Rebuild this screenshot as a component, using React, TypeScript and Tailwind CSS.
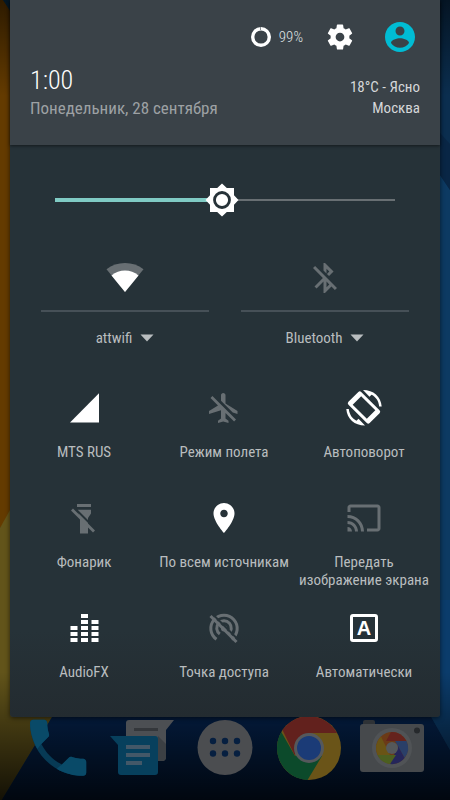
import { useState } from 'react';
import type { ReactNode } from 'react';

const paths = {
  settings:
    'M19.43 12.98c.04-.32.07-.64.07-.98s-.03-.66-.07-.98l2.11-1.65c.19-.15.24-.42.12-.64l-2-3.46c-.12-.22-.39-.3-.61-.22l-2.49 1c-.52-.4-1.08-.73-1.69-.98l-.38-2.65C14.46 2.18 14.25 2 14 2h-4c-.25 0-.46.18-.49.42l-.38 2.65c-.61.25-1.17.59-1.69.98l-2.49-1c-.23-.09-.49 0-.61.22l-2 3.46c-.13.22-.07.49.12.64l2.11 1.65c-.04.32-.07.65-.07.98s.03.66.07.98l-2.11 1.65c-.19.15-.24.42-.12.64l2 3.46c.12.22.39.3.61.22l2.49-1c.52.4 1.08.73 1.69.98l.38 2.65c.03.24.24.42.49.42h4c.25 0 .46-.18.49-.42l.38-2.65c.61-.25 1.17-.59 1.69-.98l2.49 1c.23.09.49 0 .61-.22l2-3.46c.12-.22.07-.49-.12-.64l-2.11-1.65zM12 15.5c-1.93 0-3.5-1.57-3.5-3.5s1.57-3.5 3.5-3.5 3.5 1.57 3.5 3.5-1.57 3.5-3.5 3.5z',
  account:
    'M12 2C6.48 2 2 6.48 2 12s4.48 10 10 10 10-4.48 10-10S17.52 2 12 2zm0 3c1.66 0 3 1.34 3 3s-1.34 3-3 3-3-1.34-3-3 1.34-3 3-3zm0 14.2c-2.5 0-4.71-1.28-6-3.22.03-1.99 4-3.08 6-3.08 1.99 0 5.97 1.09 6 3.08-1.29 1.94-3.5 3.22-6 3.22z',
  bluetoothOff:
    'M13 5.83l1.88 1.88-1.6 1.6 1.41 1.41 3.02-3.02L12 2h-1v5.03l2 2v-3.2zM5.41 4L4 5.41 10.59 12 5 17.59 6.41 19 11 14.41V22h1l4.29-4.29 2.3 2.29L20 18.59 5.41 4zM13 18.17v-3.76l1.88 1.88L13 18.17z',
  airplaneOff:
    'M13 9V3.5c0-.83-.67-1.5-1.5-1.5S10 2.67 10 3.5v3.68l7.83 7.83L21 16v-2l-8-5zM3 5.27l4.99 4.99L2 14v2l8-2.5V19l-2 1.5V22l3.5-1 3.5 1v-1.5L13 19v-3.73L18.73 21 20 19.73 4.27 4 3 5.27z',
  cast: 'M21 3H3c-1.1 0-2 .9-2 2v3h2V5h18v14h-7v2h7c1.1 0 2-.9 2-2V5c0-1.1-.9-2-2-2zM1 18v3h3c0-1.66-1.34-3-3-3zm0-4v2c2.76 0 5 2.24 5 5h2c0-3.87-3.13-7-7-7zm0-4v2c4.97 0 9 4.03 9 9h2c0-6.08-4.93-11-11-11z',
  place:
    'M12 2C8.13 2 5 5.13 5 9c0 5.25 7 13 7 13s7-7.75 7-13c0-3.87-3.13-7-7-7zm0 9.5c-1.38 0-2.5-1.12-2.5-2.5s1.12-2.5 2.5-2.5 2.5 1.12 2.5 2.5-1.12 2.5-2.5 2.5z',
  call: 'M6.62 10.79c1.44 2.83 3.76 5.14 6.59 6.59l2.2-2.2c.27-.27.67-.36 1.02-.24 1.12.37 2.33.57 3.57.57.55 0 1 .45 1 1V20c0 .55-.45 1-1 1-9.39 0-17-7.61-17-17 0-.55.45-1 1-1h3.5c.55 0 1 .45 1 1 0 1.25.2 2.45.57 3.57.11.35.03.74-.25 1.02l-2.2 2.2z',
};

const Icon = ({ d, className = 'size-9' }: { d: string; className?: string }) => (
  <svg viewBox="0 0 24 24" className={className} fill="currentColor" aria-hidden="true">
    <path d={d} />
  </svg>
);

const WifiIcon = () => (
  <svg viewBox="0 0 38 36" className="h-9 w-[38px]" aria-hidden="true">
    <path d="M19 32L.5 9.3Q8.5 3 19 3T37.5 9.3z" fill="#686f73" />
    <path d="M19 32L5.5 15.4Q11.5 10.5 19 10.5T32.5 15.4z" fill="#fff" />
  </svg>
);

const SignalIcon = () => (
  <svg viewBox="0 0 36 36" className="size-9" aria-hidden="true">
    <path d="M4 32.5H33V3.3z" fill="#fff" />
  </svg>
);

const RotateIcon = () => (
  <svg viewBox="0 0 36 36" className="size-9" fill="#fff" aria-hidden="true">
    <g transform="rotate(45 18 17.5)">
      <path
        fillRule="evenodd"
        d="M5 8.5h26a2 2 0 0 1 2 2v14a2 2 0 0 1-2 2h-26a2 2 0 0 1-2-2v-14a2 2 0 0 1 2-2zM8 11.5v12h20v-12z"
      />
    </g>
    <path d="M17 0C27.5 0 35 6.5 35.7 16.5H33.2C32.6 11 29.8 6.8 25.5 4.8L23.5 6.8z" />
    <path d="M19 35.5C8.5 35.5 1 29 .3 19H2.8C3.4 24.5 6.2 28.7 10.5 30.7L12.5 28.7z" />
  </svg>
);

const FlashlightOffIcon = () => (
  <svg viewBox="0 0 36 36" className="size-9" fill="currentColor" aria-hidden="true">
    <path d="M11 4h14v3H11z" />
    <path d="M11.5 9.8H25v3.7l-3 4.5v15.5h-8V18z" />
    <path d="M8 7.5L30.5 30" stroke="#263238" strokeWidth="2" />
    <path d="M6 9.5L28 31.5" stroke="currentColor" strokeWidth="2.8" />
  </svg>
);

const HotspotOffIcon = () => (
  <svg viewBox="0 0 36 36" className="size-9" fill="none" stroke="currentColor" strokeWidth="3" aria-hidden="true">
    <path d="M10.5 29.3A13.2 13.2 0 1 1 25.5 29.3" />
    <path d="M13.8 24A7.3 7.3 0 1 1 22.2 24" />
    <circle cx="18" cy="18.5" r="3" fill="currentColor" stroke="none" />
    <path d="M7 4.5L33 30.5" stroke="#263238" strokeWidth="2" />
    <path d="M4.5 6L30.5 32" />
  </svg>
);

const EqualizerIcon = () => (
  <svg viewBox="0 0 36 36" className="size-9" fill="#fff" aria-hidden="true">
    {[3, 5, 4].map((count, col) =>
      Array.from({ length: count }, (_, row) => (
        <rect key={`${col}-${row}`} x={4.5 + col * 10.5} y={28 - row * 6} width="7" height="4" />
      ))
    )}
  </svg>
);

const AutoBrightnessIcon = () => (
  <span className="my-1 flex size-7 items-center justify-center rounded-[3px] border-3 border-white font-['Liberation_Sans',sans-serif] text-xl leading-5 font-bold text-white">
    A
  </span>
);

type TileItem = { label: string; icon: ReactNode; off?: boolean };

const tiles: TileItem[] = [
  { label: 'MTS RUS', icon: <SignalIcon /> },
  { label: 'Режим полета', icon: <Icon d={paths.airplaneOff} />, off: true },
  { label: 'Автоповорот', icon: <RotateIcon /> },
  { label: 'Фонарик', icon: <FlashlightOffIcon />, off: true },
  { label: 'По всем источникам', icon: <Icon d={paths.place} /> },
  { label: 'Передать изображение экрана', icon: <Icon d={paths.cast} />, off: true },
  { label: 'AudioFX', icon: <EqualizerIcon /> },
  { label: 'Точка доступа', icon: <HotspotOffIcon />, off: true },
  { label: 'Автоматически', icon: <AutoBrightnessIcon /> },
];

const Tile = ({ label, icon, off }: TileItem) => (
  <button type="button" className="flex h-[89px] flex-col items-center gap-[17px]">
    <span className={off ? 'text-[#686f73]' : 'text-white'}>{icon}</span>
    <span className="text-[15px] leading-[18px] text-[#b9bdbf]">{label}</span>
  </button>
);

const WideTile = ({ label, icon, off }: TileItem) => (
  <div className="mx-4 flex flex-1 flex-col">
    <button
      type="button"
      aria-label={label}
      className={`flex justify-center border-b-2 border-[#465057] pb-3.5 ${off ? 'text-[#686f73]' : 'text-white'}`}
    >
      {icon}
    </button>
    <button type="button" className="mt-4 flex items-center justify-center gap-2 text-[15px] leading-5 text-[#b9bdbf]">
      {label}
      <svg viewBox="0 0 14 8" className="h-2 w-3.5" fill="currentColor" aria-hidden="true">
        <path d="M.5.5h13L7 7.5z" />
      </svg>
    </button>
  </div>
);

const BrightnessSlider = () => {
  const [value, setValue] = useState(49);

  return (
    <div className="relative mx-[45px] flex h-[38px] items-center">
      <div className="h-1 bg-[#80cbc4]" style={{ width: `${value}%` }} />
      <div className="h-0.5 flex-1 bg-[#686f73]" />
      <svg
        viewBox="0 0 34 34"
        className="absolute size-[34px] -translate-x-1/2"
        style={{ left: `${value}%` }}
        aria-hidden="true"
      >
        <path
          d="M17 .5L21.8 5H29V12.2L33.5 17L29 21.8V29H21.8L17 33.5L12.2 29H5V21.8L.5 17L5 12.2V5H12.2z"
          fill="#fff"
        />
        <circle cx="17" cy="17" r="7.5" fill="#fff" stroke="#263238" strokeWidth="2.8" />
      </svg>
      <input
        type="range"
        aria-label="Яркость"
        value={value}
        onChange={(e) => setValue(Number(e.target.value))}
        className="absolute inset-0 w-full cursor-pointer opacity-0"
      />
    </div>
  );
};

const Header = () => (
  <header className="bg-[#3a4248] px-5 pt-[19px] pb-6 shadow-[0_1px_3px_rgba(0,0,0,0.5)]">
    <div className="flex h-9 items-center justify-end gap-[22px] pr-0.5">
      <div className="flex items-center gap-2 text-[15px] font-light text-[#dfe1e2]">
        <svg viewBox="0 0 20 20" className="size-5" aria-hidden="true">
          <circle cx="10" cy="10" r="8.3" fill="none" stroke="#fff" strokeWidth="3.4" />
          <path d="M9.5 0v3" stroke="#8a9094" strokeWidth="1" />
        </svg>
        99%
      </div>
      <div className="flex items-center gap-[27px]">
        <button type="button" aria-label="Настройки" className="text-white">
          <Icon d={paths.settings} className="size-[30px]" />
        </button>
        <button type="button" aria-label="Профиль" className="text-[#00bcd4]">
          <Icon d={paths.account} />
        </button>
      </div>
    </div>
    <div className="mt-[9px] flex items-start justify-between">
      <div>
        <div className="text-[26px] leading-8 font-light text-white">1:00</div>
        <div className="text-[17px] leading-[25px] text-[#9da1a4]">Понедельник, 28 сентября</div>
      </div>
      <div className="pt-[13px] text-right text-[15px] leading-[21px] text-[#d5d7d9]">
        <div>18°C - Ясно</div>
        <div>Москва</div>
      </div>
    </div>
  </header>
);

const Wallpaper = () => (
  <svg
    viewBox="0 0 450 800"
    preserveAspectRatio="none"
    className="absolute inset-0 -z-10 size-full"
    aria-hidden="true"
  >
    <defs>
      <linearGradient id="shade" x1="0" y1="0" x2="0" y2="1">
        <stop offset="0" stopColor="#000" stopOpacity="0.55" />
        <stop offset="0.12" stopColor="#000" stopOpacity="0" />
        <stop offset="0.84" stopColor="#000" stopOpacity="0" />
        <stop offset="1" stopColor="#000" stopOpacity="0.8" />
      </linearGradient>
    </defs>
    <path d="M0 0H450V800H0z" fill="#0d3a62" />
    <path d="M225 0H450V190L430 160L225 0z" fill="#0b2e4f" />
    <path d="M430 122L450 144V190L430 160z" fill="#092645" />
    <path d="M0 0H3L60 70V480L0 528z" fill="#643b00" />
    <path d="M0 0H3L12 14V0z" fill="#0a3450" />
    <path d="M0 528L10 510L60 430V704L0 803z" fill="#62541a" />
    <path d="M60 704L0 803H450V750L430 715V600H60z" fill="#04224c" />
    <path d="M428 600H450V750L428 711z" fill="#0b3c6b" />
    <path d="M0 0H450V800H0z" fill="url(#shade)" />
  </svg>
);

const Dock = () => (
  <nav className="flex justify-between px-[26px]">
    <a href="#phone" aria-label="Телефон">
      <svg viewBox="0 0 64 64" className="size-16">
        <g transform="translate(-5.3 -6.7) scale(3.12)">
          <path d={paths.call} fill="#073a55" />
          <path d="M4 3h3.5c.55 0 1 .45 1 1 0 1.25.2 2.45.57 3.57.11.35.03.74-.25 1.02l-2.2 2.2-1.3 1.6C3.9 9.8 3 7 3 4c0-.55.45-1 1-1z" fill="#094a68" />
          <path d="M13.21 17.38l2.2-2.2c.27-.27.67-.36 1.02-.24 1.12.37 2.33.57 3.57.57.55 0 1 .45 1 1V20c0 .55-.45 1-1 1-3 0-6-.8-8.5-2.3z" fill="#094a68" />
        </g>
      </svg>
    </a>
    <a href="#messages" aria-label="Сообщения">
      <svg viewBox="0 0 64 64" className="size-16">
        <path d="M19 3h45l-8 10v27a4 4 0 0 1-4 4H19a4 4 0 0 1-3-4V6a3 3 0 0 1 3-3z" fill="#4c4f53" />
        <path d="M24 11h24v3H24z" fill="#34373b" />
        <path d="M48 19l8 8v13a4 4 0 0 1-4 4h-4z" fill="#3c4044" />
        <path d="M0 19h45a3 3 0 0 1 3 3v33a3 3 0 0 1-3 3H11a3 3 0 0 1-3-3V28z" fill="#07405d" />
        <path d="M16 28h24v4H16zM16 36h24v4H16zM16 44h16v4H16z" fill="#435868" />
      </svg>
    </a>
    <a href="#apps" aria-label="Приложения">
      <svg viewBox="0 0 64 64" className="size-16">
        <circle cx="32" cy="30.5" r="27.5" fill="#4b4d50" />
        {[20, 32, 44].map((x) => (
          <g key={x} fill="#061f40">
            <circle cx={x} cy="24" r="3.2" />
            <circle cx={x} cy="36.5" r="3.2" />
          </g>
        ))}
      </svg>
    </a>
    <a href="#browser" aria-label="Браузер">
      <svg viewBox="0 0 64 64" className="size-16">
        <circle cx="32" cy="31" r="32" fill="#6a5418" />
        <path d="M32 31L18 39L4.3 15A32 32 0 0 0 30.5 63L45 39z" fill="#0c4a2b" />
        <path d="M5.5 13A32 32 0 0 1 60 16H32L17.5 38z" fill="#62211d" />
        <circle cx="32" cy="31" r="15" fill="#55585c" />
        <circle cx="32" cy="31" r="12" fill="#1b3b77" />
      </svg>
    </a>
    <a href="#camera" aria-label="Камера">
      <svg viewBox="0 0 64 64" className="size-16">
        <rect x="3" y="3" width="12" height="8" rx="2" fill="#2e3236" />
        <rect y="7" width="64" height="48" rx="3" fill="#46494c" />
        <circle cx="57" cy="13.5" r="3" fill="#26292c" />
        <circle cx="32" cy="31" r="20" fill="#505356" />
        {/* aperture blades */}
        <circle cx="32" cy="31" r="16" fill="#6b3a17" />
        <path d="M31 15A16 16 0 0 1 46.5 24H26z" fill="#65231d" />
        <path d="M46.5 24A16 16 0 0 1 44.5 41L35 24z" fill="#2a3f68" />
        <path d="M44.5 41A16 16 0 0 1 30 47L38 29z" fill="#25265a" />
        <path d="M30 47A16 16 0 0 1 17.5 38H36z" fill="#4c5f20" />
        <path d="M17.5 38A16 16 0 0 1 21 19.5L30 38z" fill="#6a5415" />
        <circle cx="32" cy="31" r="6" fill="#55585a" />
      </svg>
    </a>
  </nav>
);

const App = () => (
  <div className="relative isolate flex min-h-screen flex-col overflow-hidden font-['Roboto_Condensed',Roboto,sans-serif]">
    <Wallpaper />
    <main className="mx-2.5 rounded-b-[3px] bg-linear-to-b from-[#263238] from-88% to-[#232b30] shadow-[0_1px_5px_rgba(0,0,0,0.6)]">
      <Header />
      <div className="pt-9">
        <BrightnessSlider />
      </div>
      <div className="mt-[41px] flex px-[15px]">
        <WideTile label="attwifi" icon={<WifiIcon />} />
        <WideTile label="Bluetooth" icon={<Icon d={paths.bluetoothOff} />} off />
      </div>
      <div className="mt-[42px] grid grid-cols-3 gap-y-[21px] pr-1.5 pb-[18px] pl-1">
        {tiles.map((tile) => (
          <Tile key={tile.label} {...tile} />
        ))}
      </div>
    </main>
    <Dock />
  </div>
);

export default App;
